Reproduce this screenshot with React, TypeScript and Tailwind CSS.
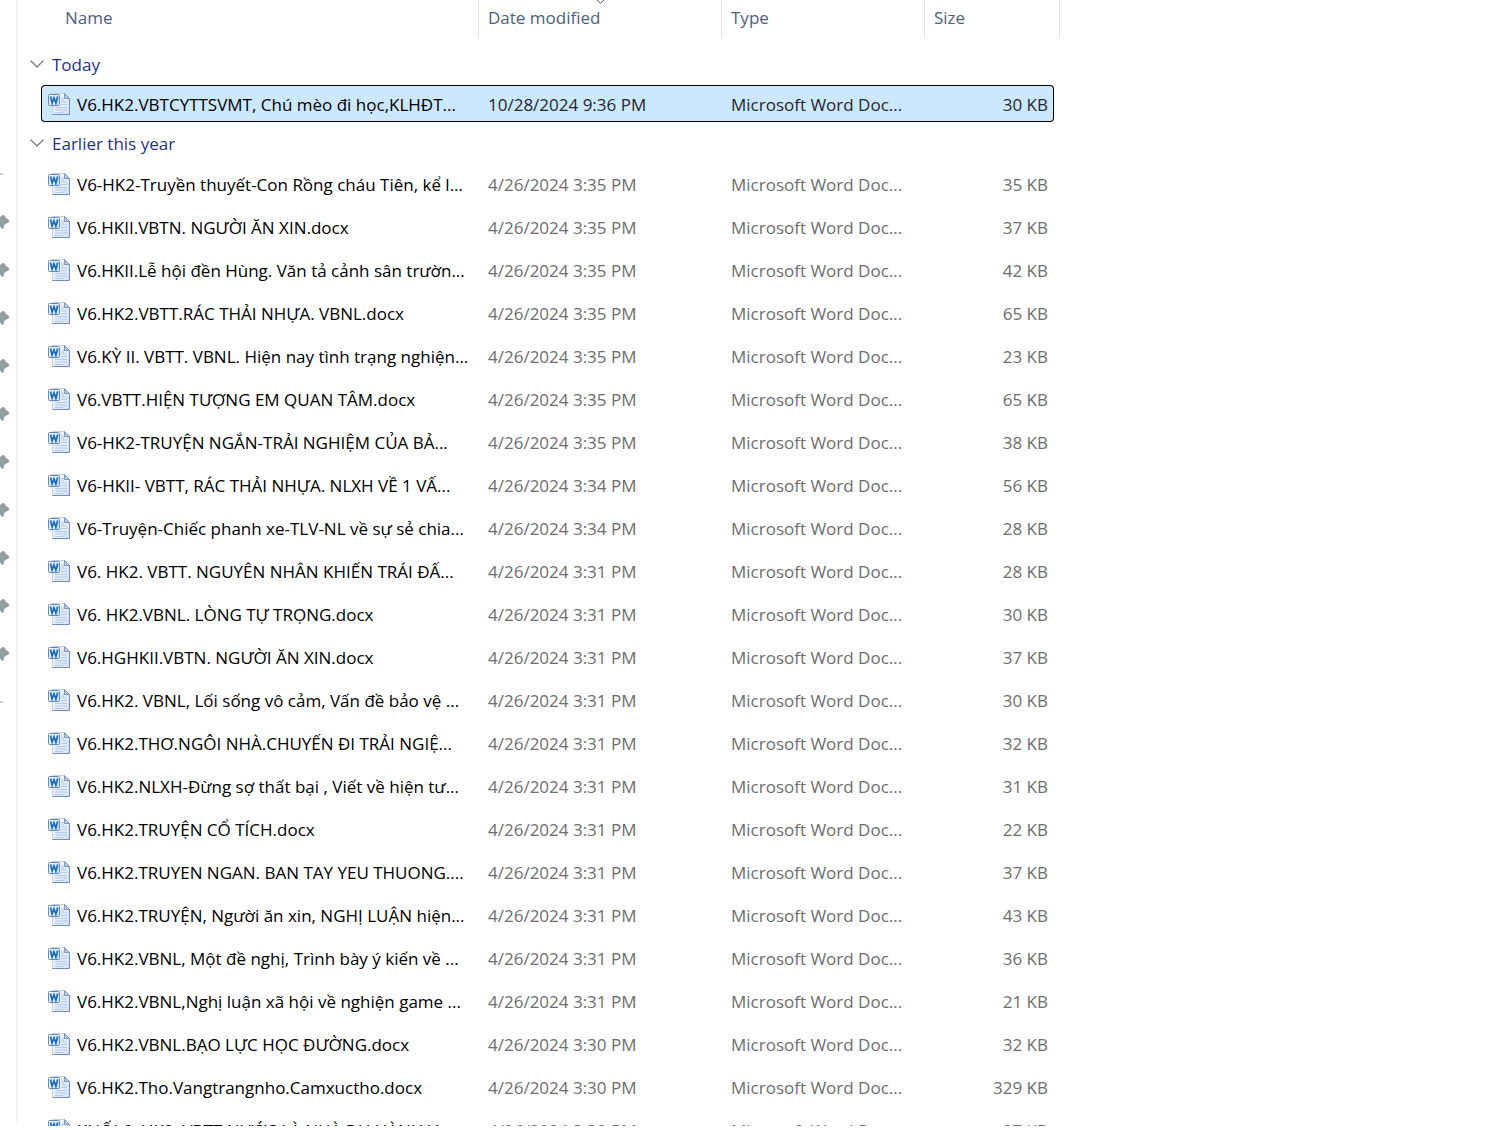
import { ChevronDown } from "lucide-react";

type FileEntry = { name: string; date: string; size: string };

const today: FileEntry[] = [
  { name: "V6.HK2.VBTCYTTSVMT, Chú mèo đi học,KLHĐT...", date: "10/28/2024 9:36 PM", size: "30 KB" },
];

const earlier: FileEntry[] = [
  { name: "V6-HK2-Truyền thuyết-Con Rồng cháu Tiên, kể l...", date: "4/26/2024 3:35 PM", size: "35 KB" },
  { name: "V6.HKII.VBTN. NGƯỜI ĂN XIN.docx", date: "4/26/2024 3:35 PM", size: "37 KB" },
  { name: "V6.HKII.Lễ hội đền Hùng. Văn tả cảnh sân trườn...", date: "4/26/2024 3:35 PM", size: "42 KB" },
  { name: "V6.HK2.VBTT.RÁC THẢI NHỰA. VBNL.docx", date: "4/26/2024 3:35 PM", size: "65 KB" },
  { name: "V6.KỲ II. VBTT. VBNL. Hiện nay tình trạng nghiện...", date: "4/26/2024 3:35 PM", size: "23 KB" },
  { name: "V6.VBTT.HIỆN TƯỢNG EM QUAN TÂM.docx", date: "4/26/2024 3:35 PM", size: "65 KB" },
  { name: "V6-HK2-TRUYỆN NGẮN-TRẢI NGHIỆM CỦA BẢ...", date: "4/26/2024 3:35 PM", size: "38 KB" },
  { name: "V6-HKII- VBTT, RÁC THẢI NHỰA. NLXH VỀ 1 VẤ...", date: "4/26/2024 3:34 PM", size: "56 KB" },
  { name: "V6-Truyện-Chiếc phanh xe-TLV-NL về sự sẻ chia...", date: "4/26/2024 3:34 PM", size: "28 KB" },
  { name: "V6. HK2. VBTT. NGUYÊN NHÂN KHIẾN TRÁI ĐẤ...", date: "4/26/2024 3:31 PM", size: "28 KB" },
  { name: "V6. HK2.VBNL. LÒNG TỰ TRỌNG.docx", date: "4/26/2024 3:31 PM", size: "30 KB" },
  { name: "V6.HGHKII.VBTN. NGƯỜI ĂN XIN.docx", date: "4/26/2024 3:31 PM", size: "37 KB" },
  { name: "V6.HK2. VBNL, Lối sống vô cảm, Vấn đề bảo vệ ...", date: "4/26/2024 3:31 PM", size: "30 KB" },
  { name: "V6.HK2.THƠ.NGÔI NHÀ.CHUYẾN ĐI TRẢI NGIỆ...", date: "4/26/2024 3:31 PM", size: "32 KB" },
  { name: "V6.HK2.NLXH-Đừng sợ thất bại , Viết về hiện tư...", date: "4/26/2024 3:31 PM", size: "31 KB" },
  { name: "V6.HK2.TRUYỆN CỔ TÍCH.docx", date: "4/26/2024 3:31 PM", size: "22 KB" },
  { name: "V6.HK2.TRUYEN NGAN. BAN TAY YEU THUONG....", date: "4/26/2024 3:31 PM", size: "37 KB" },
  { name: "V6.HK2.TRUYỆN, Người ăn xin, NGHỊ LUẬN hiện...", date: "4/26/2024 3:31 PM", size: "43 KB" },
  { name: "V6.HK2.VBNL, Một đề nghị, Trình bày ý kiến về ...", date: "4/26/2024 3:31 PM", size: "36 KB" },
  { name: "V6.HK2.VBNL,Nghị luận xã hội về nghiện game ...", date: "4/26/2024 3:31 PM", size: "21 KB" },
  { name: "V6.HK2.VBNL.BẠO LỰC HỌC ĐƯỜNG.docx", date: "4/26/2024 3:30 PM", size: "32 KB" },
  { name: "V6.HK2.Tho.Vangtrangnho.Camxuctho.docx", date: "4/26/2024 3:30 PM", size: "329 KB" },
  { name: "KHỐI 6. HK2. VBTT.NƯỚC LÀ NHÀ DU HÀNH.V...", date: "4/26/2024 3:30 PM", size: "27 KB" },
];

const pins = Array.from({ length: 10 }, (_, i) => i);

function WordIcon() {
  return (
    <svg className="mb-[2px] w-6 h-6 shrink-0" viewBox="0 0 24 24" fill="none" aria-hidden="true">
      <defs>
        <linearGradient id="page" x1="0" y1="0" x2="1" y2="1">
          <stop offset="0" stopColor="#fafcff" />
          <stop offset="1" stopColor="#d3e0f5" />
        </linearGradient>
        <linearGradient id="badge" x1="0" y1="0" x2="1" y2="1">
          <stop offset="0" stopColor="#ffffff" />
          <stop offset="1" stopColor="#c3dcf5" />
        </linearGradient>
      </defs>
      <path d="M5.5 1.5H17.5L22.5 6.5V22.5H5.5Z" fill="url(#page)" stroke="#c3d0e6" />
      <path d="M22.5 6.5V22.5H5.5" stroke="#6f8cc0" />
      <path d="M17.5 1.5V6.5H22.5Z" fill="#b9cbe4" stroke="#7f95bb" />
      <path d="M14 6H17M14 8H17M14 10H20M14 12.5H20M8 15.5H20M8 18H20M8 20.5H16" stroke="#b5c9ea" />
      <rect x="1.5" y="2.5" width="11" height="11" rx="1" fill="url(#badge)" stroke="#6487bd" />
      <path d="M3.6 5.2L5.1 11L7 5.8L8.9 11L10.6 5.2" stroke="#1668be" strokeWidth="1.7" />
      <path d="M2.8 5H5M9.4 5H11.4" stroke="#1668be" />
    </svg>
  );
}

function PinIcon() {
  return (
    <svg className="w-[10px] h-4" viewBox="0 0 10 16" fill="#929ca3" aria-hidden="true">
      <path d="M0 3L2.5 1L4.5 1.3L5.2 3L9.6 7L9 8.3L5.5 9.8L4 11.5L3.6 14.3L2.4 15L0 12.5Z" />
    </svg>
  );
}

function GroupRow({ label, height }: { label: string; height: string }) {
  return (
    <tr className={height}>
      <th colSpan={5} scope="rowgroup" className="p-0 align-bottom text-left font-normal">
        <button className="-ml-4 flex h-[42px] items-center gap-[3px] pt-[2px] text-[#1e3287]">
          <ChevronDown className="mb-[3px] w-6 h-6 text-[#7a7a7a]" strokeWidth={1.3} />
          {label}
        </button>
      </th>
    </tr>
  );
}

function FileRow({ file, selected = false }: { file: FileEntry; selected?: boolean }) {
  const cell = selected
    ? "border-y border-black bg-[#cce8ff] p-0 pt-[2px] text-[#262626]"
    : "p-0 pb-[2px] text-[#6d6d6d]";
  return (
    <tr className={selected ? "h-[37px]" : "h-[43px]"} aria-selected={selected}>
      <td className={`${cell} ${selected ? "rounded-l-sm border-l pl-[5px]" : "pl-[6px]"}`}>
        <div className="flex items-center gap-[6px] text-black">
          <WordIcon />
          <span>{file.name}</span>
        </div>
      </td>
      <td className={`${cell} pl-[9px]`}>{file.date}</td>
      <td className={`${cell} pl-[9px]`}>Microsoft Word Doc...</td>
      <td className={`${cell} text-right ${selected ? "rounded-r-sm border-r pr-[5px]" : "pr-[6px]"}`}>
        {file.size}
      </td>
      <td className="p-0" />
    </tr>
  );
}

export default function App() {
  return (
    <div className="flex h-screen overflow-hidden border-b-4 border-white bg-white font-['Open_Sans','Noto_Sans',sans-serif] text-[17px] leading-6">
      {/* Quick access edge */}
      <aside className="w-[18px] shrink-0 border-r-2 border-[#f5f5f5] pt-[150px]">
        <div className="flex h-12 items-center">
          <div className="h-[2px] w-[3px] bg-[#cfcfcf]" />
        </div>
        {pins.map((pin) => (
          <div key={pin} className="flex h-12 items-center">
            <PinIcon />
          </div>
        ))}
        <div className="flex h-12 items-center">
          <div className="h-[2px] w-[3px] bg-[#cfcfcf]" />
        </div>
      </aside>

      {/* File list */}
      <main className="min-w-0 flex-1 pl-[23px]">
        <table className="table-fixed w-[1019px] border-separate border-spacing-0 whitespace-nowrap">
          <colgroup>
            <col className="w-[438px]" />
            <col className="w-[243px]" />
            <col className="w-[203px]" />
            <col className="w-[129px]" />
            <col className="w-[6px]" />
          </colgroup>
          <thead>
            <tr className="h-[38px] text-left text-[#4c607a]">
              <th scope="col" className="border-r border-[#e5e5e5] p-0 pb-[2px] pl-6 font-normal">Name</th>
              <th scope="col" className="relative border-r border-[#e5e5e5] p-0 pb-[2px] pl-[9px] font-normal">
                Date modified
                <svg className="absolute top-0 left-[117px] w-[9px] h-1" viewBox="0 0 9 4" fill="none" stroke="#5a5a5a" aria-hidden="true">
                  <path d="M1 0L4.5 3.3L8 0" />
                </svg>
              </th>
              <th scope="col" className="border-r border-[#e5e5e5] p-0 pb-[2px] pl-[9px] font-normal">Type</th>
              <th scope="col" colSpan={2} className="border-r border-[#e5e5e5] p-0 pb-[2px] pl-[9px] font-normal">Size</th>
            </tr>
          </thead>
          <tbody>
            <GroupRow label="Today" height="h-[47px]" />
            {today.map((file) => (
              <FileRow key={file.name} file={file} selected />
            ))}
          </tbody>
          <tbody>
            <GroupRow label="Earlier this year" height="h-[42px]" />
            {earlier.map((file) => (
              <FileRow key={file.name} file={file} />
            ))}
          </tbody>
        </table>
      </main>
    </div>
  );
}
